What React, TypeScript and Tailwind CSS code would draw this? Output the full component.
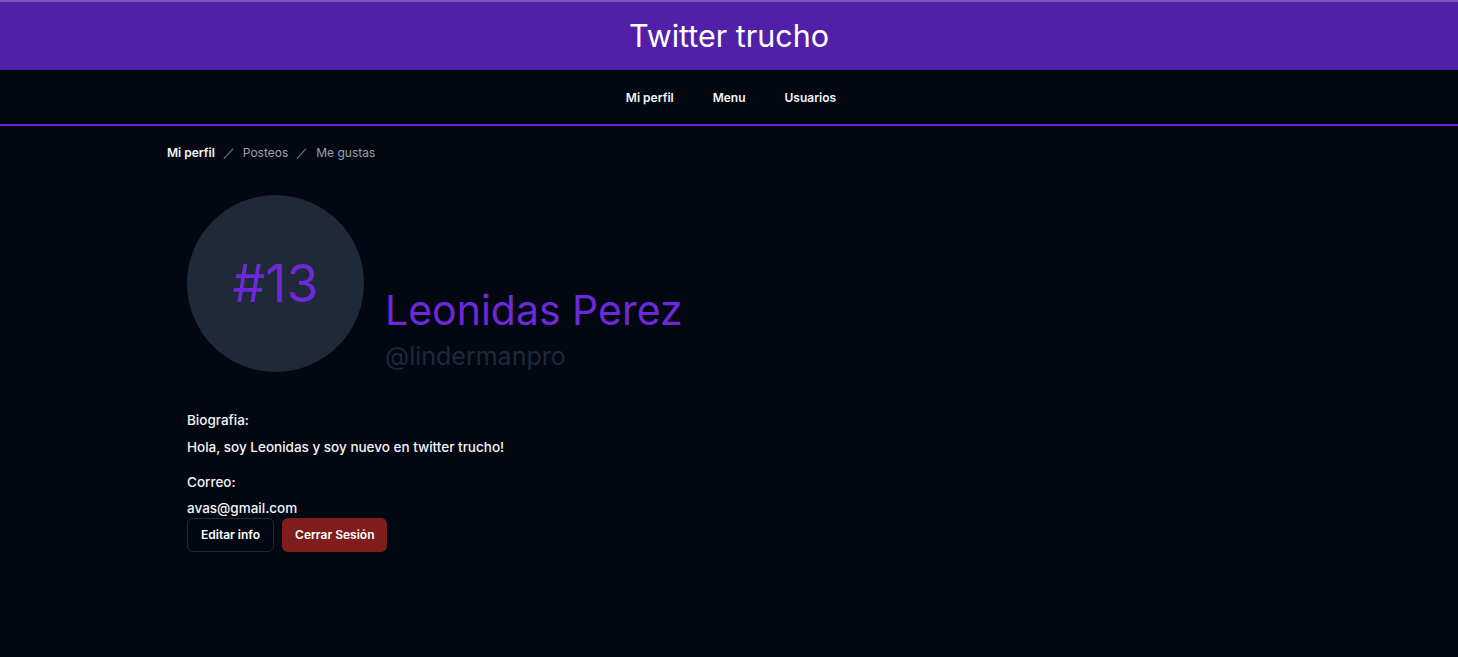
const App = () => {
    return (
        <div className="min-h-screen bg-[#030712] text-white" style={{fontFamily: 'Inter, "Noto Sans", sans-serif'}}>
            <div className="h-[2px] bg-[#7b55bf]"></div>
            <header className="h-[68px] bg-[#5220a8] flex items-center justify-center">
                <h1 className="text-[30.5px] leading-none">Twitter trucho</h1>
            </header>
            <nav className="h-[56px] border-b-2 border-[#6d28d9] flex items-center justify-center gap-[39px] pt-[1px] pl-[4px]">
                <a className="text-xs font-semibold text-gray-100">Mi perfil</a>
                <a className="text-xs font-semibold text-gray-100">Menu</a>
                <a className="text-xs font-semibold text-gray-100">Usuarios</a>
            </nav>
            <main className="mx-auto max-w-[1124px]">
                <div className="flex items-center gap-2 pt-[19px] text-xs">
                    <span className="font-semibold text-gray-100">Mi perfil</span>
                    <span className="text-gray-400">／</span>
                    <span className="text-gray-400">Posteos</span>
                    <span className="text-gray-400">／</span>
                    <span className="text-gray-400">Me gustas</span>
                </div>
                <section className="pl-5 pt-[34px]">
                    <div className="flex items-end gap-[21px]">
                        <div className="w-[177px] h-[177px] rounded-full bg-[#1f2937] flex items-center justify-center">
                            <span className="text-[52px] text-[#6d28d9] leading-none">#13</span>
                        </div>
                        <div>
                            <h2 className="text-[41px] leading-[48px] text-[#6d28d9]">Leonidas Perez</h2>
                            <p className="text-[25px] text-[#1f2937] leading-8 mt-[6px]">@lindermanpro</p>
                        </div>
                    </div>
                    <div className="mt-[38px] text-[13.5px] font-medium text-gray-100">
                        <p className="leading-5">Biografia:</p>
                        <p className="mt-[7px] leading-5">Hola, soy Leonidas y soy nuevo en twitter trucho!</p>
                        <p className="mt-[15px] leading-5">Correo:</p>
                        <p className="mt-[6px] leading-5">avas@gmail.com</p>
                    </div>
                    <div className="flex gap-2 mt-0">
                        <button className="h-[34px] px-[13px] rounded-md border border-gray-800 bg-[#030712] text-xs font-semibold">Editar info</button>
                        <button className="h-[34px] px-[13px] rounded-md bg-[#7f1d1d] text-xs font-semibold">Cerrar Sesión</button>
                    </div>
                </section>
            </main>
        </div>
    )
}

export default App
